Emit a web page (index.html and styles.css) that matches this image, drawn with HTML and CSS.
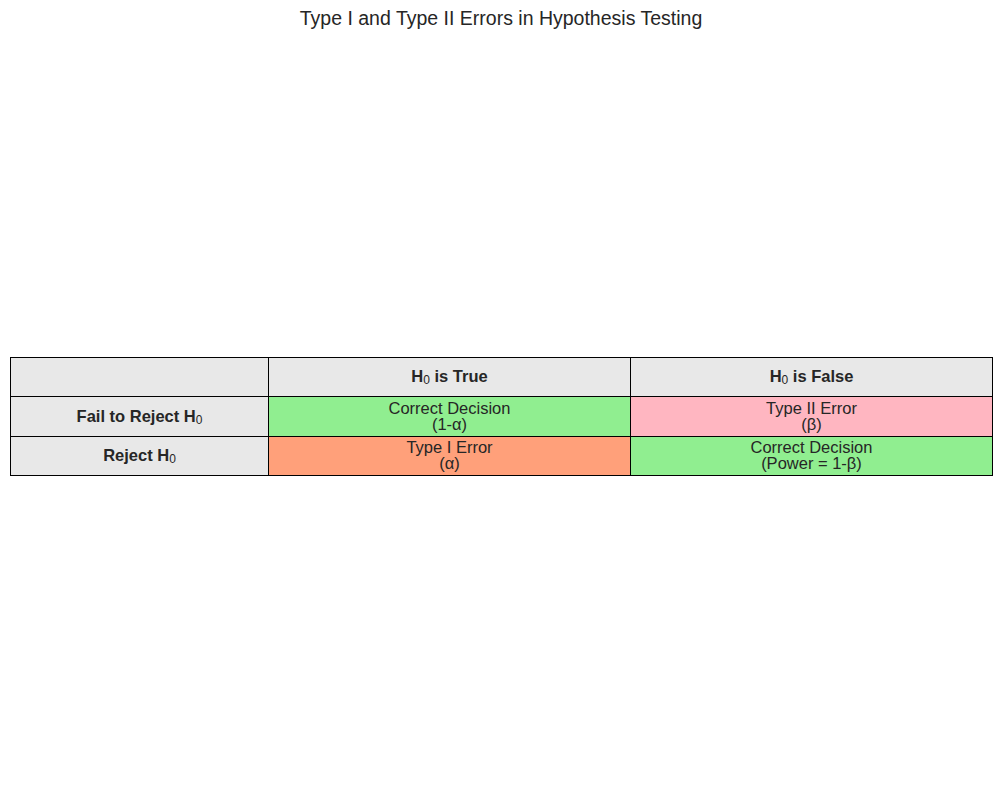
FILE: index.html
```html
<!DOCTYPE html>
<html>
<head>
<meta charset="utf-8">
<link rel="stylesheet" href="styles.css">
</head>
<body>
<div class="page">
  <h1 class="title">Type I and Type II Errors in Hypothesis Testing</h1>
  <table class="grid">
    <colgroup>
      <col class="c0"><col class="c1"><col class="c2">
    </colgroup>
    <tr class="r0">
      <td class="head"></td>
      <td class="head bold">H<sub>0</sub> is True</td>
      <td class="head bold">H<sub>0</sub> is False</td>
    </tr>
    <tr class="r1">
      <td class="head bold">Fail to Reject H<sub>0</sub></td>
      <td class="green">Correct Decision<br>(1-α)</td>
      <td class="pink">Type II Error<br>(β)</td>
    </tr>
    <tr class="r2">
      <td class="head bold">Reject H<sub>0</sub></td>
      <td class="salmon">Type I Error<br>(α)</td>
      <td class="green">Correct Decision<br>(Power = 1-β)</td>
    </tr>
  </table>
</div>
</body>
</html>
```

FILE: styles.css
```css
html, body {
  margin: 0;
  padding: 0;
  background: #ffffff;
}
.page {
  width: 1002px;
  height: 790px;
  font-family: "Liberation Sans", Arial, sans-serif;
  color: #262626;
}
.title {
  margin: 0;
  padding-top: 7px;
  font-size: 19.5px;
  font-weight: normal;
  text-align: center;
  line-height: 22px;
}
.grid {
  margin: 328px 0 0 10px;
  width: 982px;
  border-collapse: collapse;
  table-layout: fixed;
  font-size: 16.5px;
}
.c0 { width: 258px; }
.c1 { width: 362px; }
.c2 { width: 362px; }
.grid td {
  border: 1px solid #000000;
  text-align: center;
  vertical-align: middle;
  padding: 0 0 2px 0;
  line-height: 16px;
}
.r0 td { height: 36px; }
.r1 td { height: 37px; }
.r2 td { height: 36px; }
.head { background: #e8e8e8; }
.bold { font-weight: bold; }
.green { background: #90ee90; }
.pink { background: #ffb6c1; }
.salmon { background: #ffa07a; }
sub {
  font-size: 12px;
  font-weight: normal;
  vertical-align: -2px;
  line-height: 0;
}
```
